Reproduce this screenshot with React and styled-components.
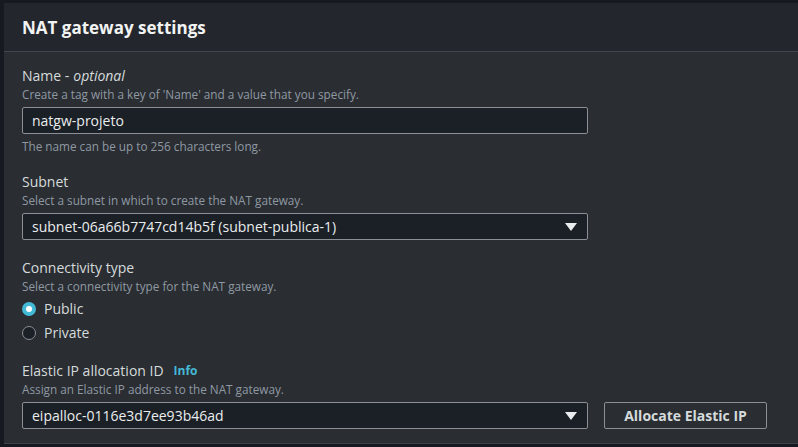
import React from "react";
import styled, { createGlobalStyle } from "styled-components";

const GlobalStyle = createGlobalStyle`
  html, body {
    margin: 0;
    padding: 0;
    background: #16191f;
    font-family: "Open Sans", "Noto Sans", sans-serif;
  }
`;

const Page = styled.div`
  width: 798px;
  height: 447px;
  overflow: hidden;
  background: #16191f;
  padding: 3px 0 0 4px;
  box-sizing: border-box;
`;

const Panel = styled.div`
  background: #2a2d32;
  border-bottom: 1px solid #3d4148;
  padding-bottom: 14px;
`;

const Header = styled.div`
  background: #23262c;
  border-bottom: 1px solid #41454c;
  height: 48px;
  display: flex;
  align-items: center;
  padding-left: 18px;
`;

const Title = styled.h2`
  margin: 0;
  font-size: 17px;
  font-weight: 700;
  color: #f2f3f3;
`;

const Body = styled.div`
  padding: 14px 0 0 18px;
  display: flex;
  flex-direction: column;
  gap: 18px;
`;

const Field = styled.div`
  display: flex;
  flex-direction: column;
`;

const Label = styled.div`
  font-size: 14px;
  color: #d5dbdb;
  line-height: 20px;
  display: flex;
  align-items: center;
  gap: 10px;

  em {
    font-style: italic;
    margin-left: 4px;
  }
`;

const Info = styled.span`
  color: #44b9d6;
  font-size: 12px;
  font-weight: 700;
`;

const Desc = styled.div`
  font-size: 11.75px;
  color: #8f99a3;
  line-height: 16px;
  margin-bottom: ${(p) => (p.$gap ? p.$gap : 0)}px;
`;

const Hint = styled(Desc)`
  margin-top: 4px;
`;

const Row = styled.div`
  display: flex;
  align-items: center;
  gap: 16px;
`;

const Box = styled.div`
  width: 566px;
  height: 27px;
  box-sizing: border-box;
  background: #1b1f26;
  border: 1px solid #8c9096;
  border-radius: 2px;
  display: flex;
  align-items: center;
  justify-content: space-between;
  padding: 0 10px 0 9px;
  font-size: 14px;
  color: #eaeded;
`;

const Caret = styled.svg`
  width: 12px;
  height: 10px;
  fill: #eaeded;
`;

const Radios = styled.div`
  display: flex;
  flex-direction: column;
  gap: 6px;
  margin: 6px 0 1px;
`;

const RadioRow = styled.label`
  display: flex;
  align-items: center;
  gap: 8px;
  font-size: 14px;
  color: #d5dbdb;
  line-height: 18px;
`;

const Dot = styled.span`
  width: 14px;
  height: 14px;
  box-sizing: border-box;
  border-radius: 50%;
  border: ${(p) => (p.$on ? "4px solid #44b9d6" : "1.5px solid #8c9096")};
  background: ${(p) => (p.$on ? "#ffffff" : "#1b1f26")};
`;

const Button = styled.button`
  width: 163px;
  height: 27px;
  box-sizing: border-box;
  background: transparent;
  border: 1px solid #8c9096;
  border-radius: 2px;
  color: #d5dbdb;
  font-family: inherit;
  font-size: 14px;
  font-weight: 700;
`;

function Select({ value }) {
  return (
    <Box>
      <span>{value}</span>
      <Caret viewBox="0 0 12 10">
        <path d="M0 1h12L6 9z" />
      </Caret>
    </Box>
  );
}

export default function App() {
  return (
    <Page>
      <GlobalStyle />
      <Panel>
        <Header>
          <Title>NAT gateway settings</Title>
        </Header>
        <Body>
          <Field>
            <Label>
              <span>
                Name -<em>optional</em>
              </span>
            </Label>
            <Desc $gap={5}>Create a tag with a key of 'Name' and a value that you specify.</Desc>
            <Box>natgw-projeto</Box>
            <Hint>The name can be up to 256 characters long.</Hint>
          </Field>
          <Field>
            <Label>Subnet</Label>
            <Desc $gap={5}>Select a subnet in which to create the NAT gateway.</Desc>
            <Select value="subnet-06a66b7747cd14b5f (subnet-publica-1)" />
          </Field>
          <Field>
            <Label>Connectivity type</Label>
            <Desc>Select a connectivity type for the NAT gateway.</Desc>
            <Radios>
              <RadioRow>
                <Dot $on />
                Public
              </RadioRow>
              <RadioRow>
                <Dot />
                Private
              </RadioRow>
            </Radios>
          </Field>
          <Field>
            <Label>
              Elastic IP allocation ID <Info>Info</Info>
            </Label>
            <Desc $gap={5}>Assign an Elastic IP address to the NAT gateway.</Desc>
            <Row>
              <Select value="eipalloc-0116e3d7ee93b46ad" />
              <Button>Allocate Elastic IP</Button>
            </Row>
          </Field>
        </Body>
      </Panel>
    </Page>
  );
}
